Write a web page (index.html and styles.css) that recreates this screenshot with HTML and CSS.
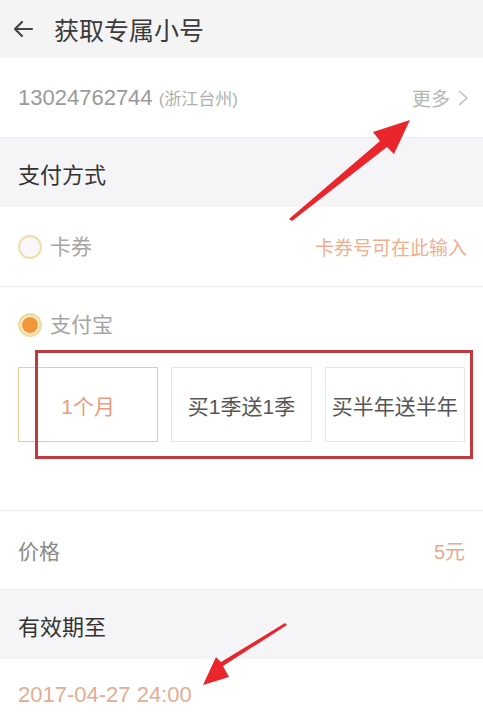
FILE: index.html
```html
<!DOCTYPE html>
<html lang="zh-CN">
<head>
<meta charset="UTF-8">
<meta name="viewport" content="width=device-width, initial-scale=1.0">
<title>获取专属小号</title>
<link rel="stylesheet" href="styles.css">
</head>
<body>
<div class="page">
    <header class="topbar">
        <svg class="back" width="22" height="20" viewBox="0 0 22 20">
            <path d="M20 10 H3 M10 3 L3 10 L10 17" fill="none" stroke="#444" stroke-width="2.2" stroke-linecap="round" stroke-linejoin="round"/>
        </svg>
        <h1 class="title">获取专属小号</h1>
    </header>

    <div class="row phone_row">
        <span class="phone">13024762744 <small>(浙江台州)</small></span>
        <span class="more">更多
            <svg width="12" height="20" viewBox="0 0 12 20">
                <path d="M2 3 L10 10 L2 17" fill="none" stroke="#bbb" stroke-width="1.5"/>
            </svg>
        </span>
    </div>

    <div class="section_title">支付方式</div>

    <div class="row pay_row">
        <span class="radio_label"><span class="radio"></span>卡券</span>
        <span class="hint">卡券号可在此输入</span>
    </div>

    <div class="alipay">
        <div class="radio_label"><span class="radio checked"></span>支付宝</div>
        <div class="options">
            <div class="option active">1个月</div>
            <div class="option">买1季送1季</div>
            <div class="option">买半年送半年</div>
        </div>
    </div>

    <div class="row price_row">
        <span class="label">价格</span>
        <span class="price">5元</span>
    </div>

    <div class="section_title">有效期至</div>

    <div class="row date_row">
        <span class="date">2017-04-27 24:00</span>
    </div>
</div>

<!-- annotations drawn on top of the screenshot -->
<div class="mark_box"></div>
<svg class="arrows" width="483" height="721" viewBox="0 0 483 721">
    <g fill="#e8262b">
        <polygon points="289,219 380,141 373,132 410,120 394,154 387,147 292,221"/>
        <polygon points="287,625 223,666 229,677 203,685 216,657 221,662 285,623"/>
    </g>
</svg>
</body>
</html>
```

FILE: styles.css
```css
* {
    margin: 0;
    padding: 0;
    box-sizing: border-box;
}

body {
    width: 483px;
    height: 721px;
    overflow: hidden;
    position: relative;
    background: #ffffff;
    font-family: "Liberation Sans", "Noto Sans CJK SC", sans-serif;
    color: #333;
}

.topbar {
    height: 58px;
    display: flex;
    align-items: center;
    gap: 20px;
    padding-left: 12px;
    background: #f4f4f4;
}

.title {
    font-size: 25px;
    font-weight: normal;
    color: #3a3a3a;
}

.row {
    display: flex;
    align-items: center;
    justify-content: space-between;
    padding: 0 18px;
    background: #ffffff;
}

.phone_row {
    height: 80px;
    border-bottom: 1px solid #ebebeb;
}

.phone {
    font-size: 22px;
    color: #9a9a9a;
}

.phone small {
    font-size: 17px;
    color: #b0b0b0;
}

.more {
    display: flex;
    align-items: center;
    gap: 7px;
    font-size: 19px;
    color: #b5b5b5;
    margin-right: -4px;
}

.section_title {
    height: 69px;
    display: flex;
    align-items: center;
    padding-left: 18px;
    font-size: 22px;
    color: #333;
    background: #f5f5f7;
}

.pay_row {
    height: 80px;
    border-bottom: 1px solid #ebebeb;
}

.radio_label {
    display: flex;
    align-items: center;
    gap: 8px;
    font-size: 21px;
    line-height: 24px;
    color: #a5a5a5;
}

.radio {
    width: 24px;
    height: 24px;
    border-radius: 50%;
    border: 2px solid #ece0a8;
    background: #f9f7fb;
}

.radio.checked {
    background: #f2963c;
    box-shadow: inset 0 0 0 2px #fdf1d0;
}

.hint {
    font-size: 19px;
    color: #f2ad8e;
    margin-right: -2px;
}

.alipay {
    height: 224px;
    padding: 26px 18px 0;
    border-bottom: 1px solid #ebebeb;
}

.options {
    display: flex;
    gap: 13px;
    margin-top: 30px;
}

.option {
    width: 141px;
    height: 75px;
    display: flex;
    align-items: center;
    justify-content: center;
    border: 1px solid #e6e6e6;
    font-size: 21px;
    color: #555;
}

.option.active {
    border-color: #eec79a;
    color: #ec9a7c;
}

.price_row {
    height: 79px;
    border-bottom: 1px solid #ebebeb;
}

.label {
    font-size: 21px;
    color: #8a8a8a;
}

.price {
    font-size: 20px;
    color: #e8a98e;
}

.date_row {
    height: 61px;
    align-items: flex-start;
    padding-top: 23px;
}

.date {
    font-size: 22px;
    color: #e3ad94;
}

.mark_box {
    position: absolute;
    left: 35px;
    top: 350px;
    width: 438px;
    height: 109px;
    border: 3px solid #c23a3d;
}

.arrows {
    position: absolute;
    left: 0;
    top: 0;
    pointer-events: none;
}
```
